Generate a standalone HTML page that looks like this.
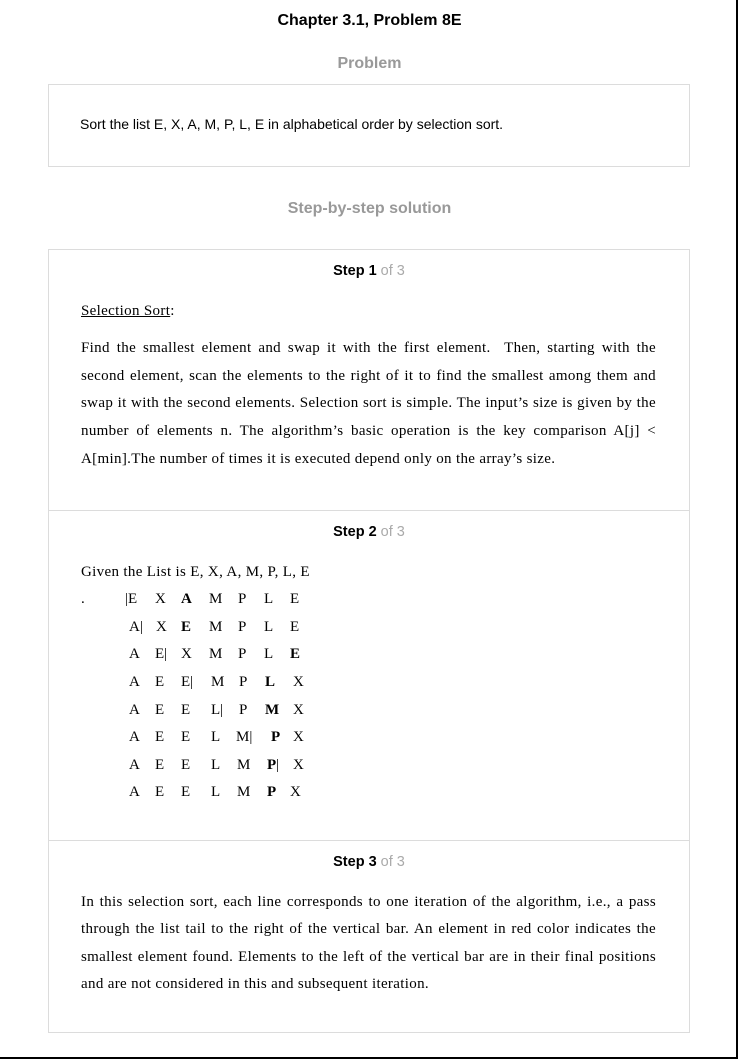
<!DOCTYPE html>
<html><head><meta charset="utf-8"><style>
html,body{margin:0;padding:0}
body{width:739px;height:1060px;position:relative;background:#fff;overflow:hidden}
.frame{position:absolute;left:0;top:0;width:736px;height:1057px;border-right:2px solid #000;border-bottom:2px solid #000}
.a{position:absolute;white-space:nowrap}
.h{font-family:"Liberation Sans",sans-serif;font-weight:bold;text-align:center;left:0;width:739px}
.box{position:absolute;border:1px solid #dcdcdc;box-sizing:border-box}
.hr{position:absolute;left:48px;width:642px;height:1px;background:#dcdcdc}
.st{font-family:"Liberation Sans",sans-serif;font-size:14.5px;font-weight:bold;text-align:center;left:48px;width:642px;line-height:18px}
.st span{color:#aaa;font-weight:normal}
.s{font-family:"Liberation Serif",serif;font-size:15px;letter-spacing:0.33px;line-height:18px;color:#000}
.j{left:81px;width:575px;text-align:justify;text-align-last:justify}
.c{position:absolute;font-family:"Liberation Serif",serif;font-size:15px;line-height:18px}
</style></head><body>
<div class="frame"></div>
<div class="a h" style="top:11px;font-size:16px;line-height:20px;color:#000">Chapter 3.1, Problem 8E</div>
<div class="a h" style="top:54px;font-size:16px;line-height:20px;color:#999">Problem</div>
<div class="box" style="left:48px;top:84px;width:642px;height:83px"></div>
<div class="a" style="left:80px;top:115px;font-family:'Liberation Sans',sans-serif;font-size:14px;line-height:18px">Sort the list E, X, A, M, P, L, E in alphabetical order by selection sort.</div>
<div class="a h" style="top:199px;font-size:16px;line-height:20px;color:#999">Step-by-step solution</div>
<div class="box" style="left:48px;top:249px;width:642px;height:784px"></div>
<div class="hr" style="top:510px"></div>
<div class="hr" style="top:840px"></div>

<div class="a st" style="top:262px">Step 1 <span>of 3</span></div>
<div class="a s" style="left:81px;top:302px"><u>Selection Sort</u>:</div>
<div class="a s j" style="top:339px">Find the smallest element and swap it with the first element.&nbsp; Then, starting with the</div>
<div class="a s j" style="top:367px">second element, scan the elements to the right of it to find the smallest among them and</div>
<div class="a s j" style="top:394px">swap it with the second elements. Selection sort is simple. The input’s size is given by the</div>
<div class="a s j" style="top:422px">number of elements n. The algorithm’s basic operation is the key comparison A[j] &lt;</div>
<div class="a s" style="left:81px;top:450px">A[min].The number of times it is executed depend only on the array’s size.</div>

<div class="a st" style="top:523px">Step 2 <span>of 3</span></div>
<div class="a s" style="left:81px;top:563px">Given the List is E, X, A, M, P, L, E</div>
<div class="a s" style="left:81px;top:590px">.</div>

<div class="c" style="top:590px;left:125px">|E</div><div class="c" style="top:590px;left:155px">X</div><div class="c" style="top:590px;left:181px"><b>A</b></div><div class="c" style="top:590px;left:209px">M</div><div class="c" style="top:590px;left:238px">P</div><div class="c" style="top:590px;left:264px">L</div><div class="c" style="top:590px;left:290px">E</div>

<div class="c" style="top:618px;left:129px">A|</div><div class="c" style="top:618px;left:156px">X</div><div class="c" style="top:618px;left:181px"><b>E</b></div><div class="c" style="top:618px;left:209px">M</div><div class="c" style="top:618px;left:238px">P</div><div class="c" style="top:618px;left:264px">L</div><div class="c" style="top:618px;left:290px">E</div>

<div class="c" style="top:645px;left:129px">A</div><div class="c" style="top:645px;left:155px">E|</div><div class="c" style="top:645px;left:181px">X</div><div class="c" style="top:645px;left:209px">M</div><div class="c" style="top:645px;left:238px">P</div><div class="c" style="top:645px;left:264px">L</div><div class="c" style="top:645px;left:290px"><b>E</b></div>

<div class="c" style="top:673px;left:129px">A</div><div class="c" style="top:673px;left:155px">E</div><div class="c" style="top:673px;left:181px">E|</div><div class="c" style="top:673px;left:211px">M</div><div class="c" style="top:673px;left:239px">P</div><div class="c" style="top:673px;left:265px"><b>L</b></div><div class="c" style="top:673px;left:293px">X</div>

<div class="c" style="top:701px;left:129px">A</div><div class="c" style="top:701px;left:155px">E</div><div class="c" style="top:701px;left:181px">E</div><div class="c" style="top:701px;left:211px">L|</div><div class="c" style="top:701px;left:239px">P</div><div class="c" style="top:701px;left:265px"><b>M</b></div><div class="c" style="top:701px;left:293px">X</div>

<div class="c" style="top:728px;left:129px">A</div><div class="c" style="top:728px;left:155px">E</div><div class="c" style="top:728px;left:181px">E</div><div class="c" style="top:728px;left:211px">L</div><div class="c" style="top:728px;left:236px">M|</div><div class="c" style="top:728px;left:271px"><b>P</b></div><div class="c" style="top:728px;left:293px">X</div>

<div class="c" style="top:756px;left:129px">A</div><div class="c" style="top:756px;left:155px">E</div><div class="c" style="top:756px;left:181px">E</div><div class="c" style="top:756px;left:211px">L</div><div class="c" style="top:756px;left:237px">M</div><div class="c" style="top:756px;left:267px"><b>P</b>|</div><div class="c" style="top:756px;left:293px">X</div>

<div class="c" style="top:783px;left:129px">A</div><div class="c" style="top:783px;left:155px">E</div><div class="c" style="top:783px;left:181px">E</div><div class="c" style="top:783px;left:211px">L</div><div class="c" style="top:783px;left:237px">M</div><div class="c" style="top:783px;left:267px"><b>P</b></div><div class="c" style="top:783px;left:290px">X</div>

<div class="a st" style="top:853px">Step 3 <span>of 3</span></div>
<div class="a s j" style="top:893px">In this selection sort, each line corresponds to one iteration of the algorithm, i.e., a pass</div>
<div class="a s j" style="top:920px">through the list tail to the right of the vertical bar. An element in red color indicates the</div>
<div class="a s j" style="top:948px">smallest element found. Elements to the left of the vertical bar are in their final positions</div>
<div class="a s" style="left:81px;top:975px">and are not considered in this and subsequent iteration.</div>
</body></html>
